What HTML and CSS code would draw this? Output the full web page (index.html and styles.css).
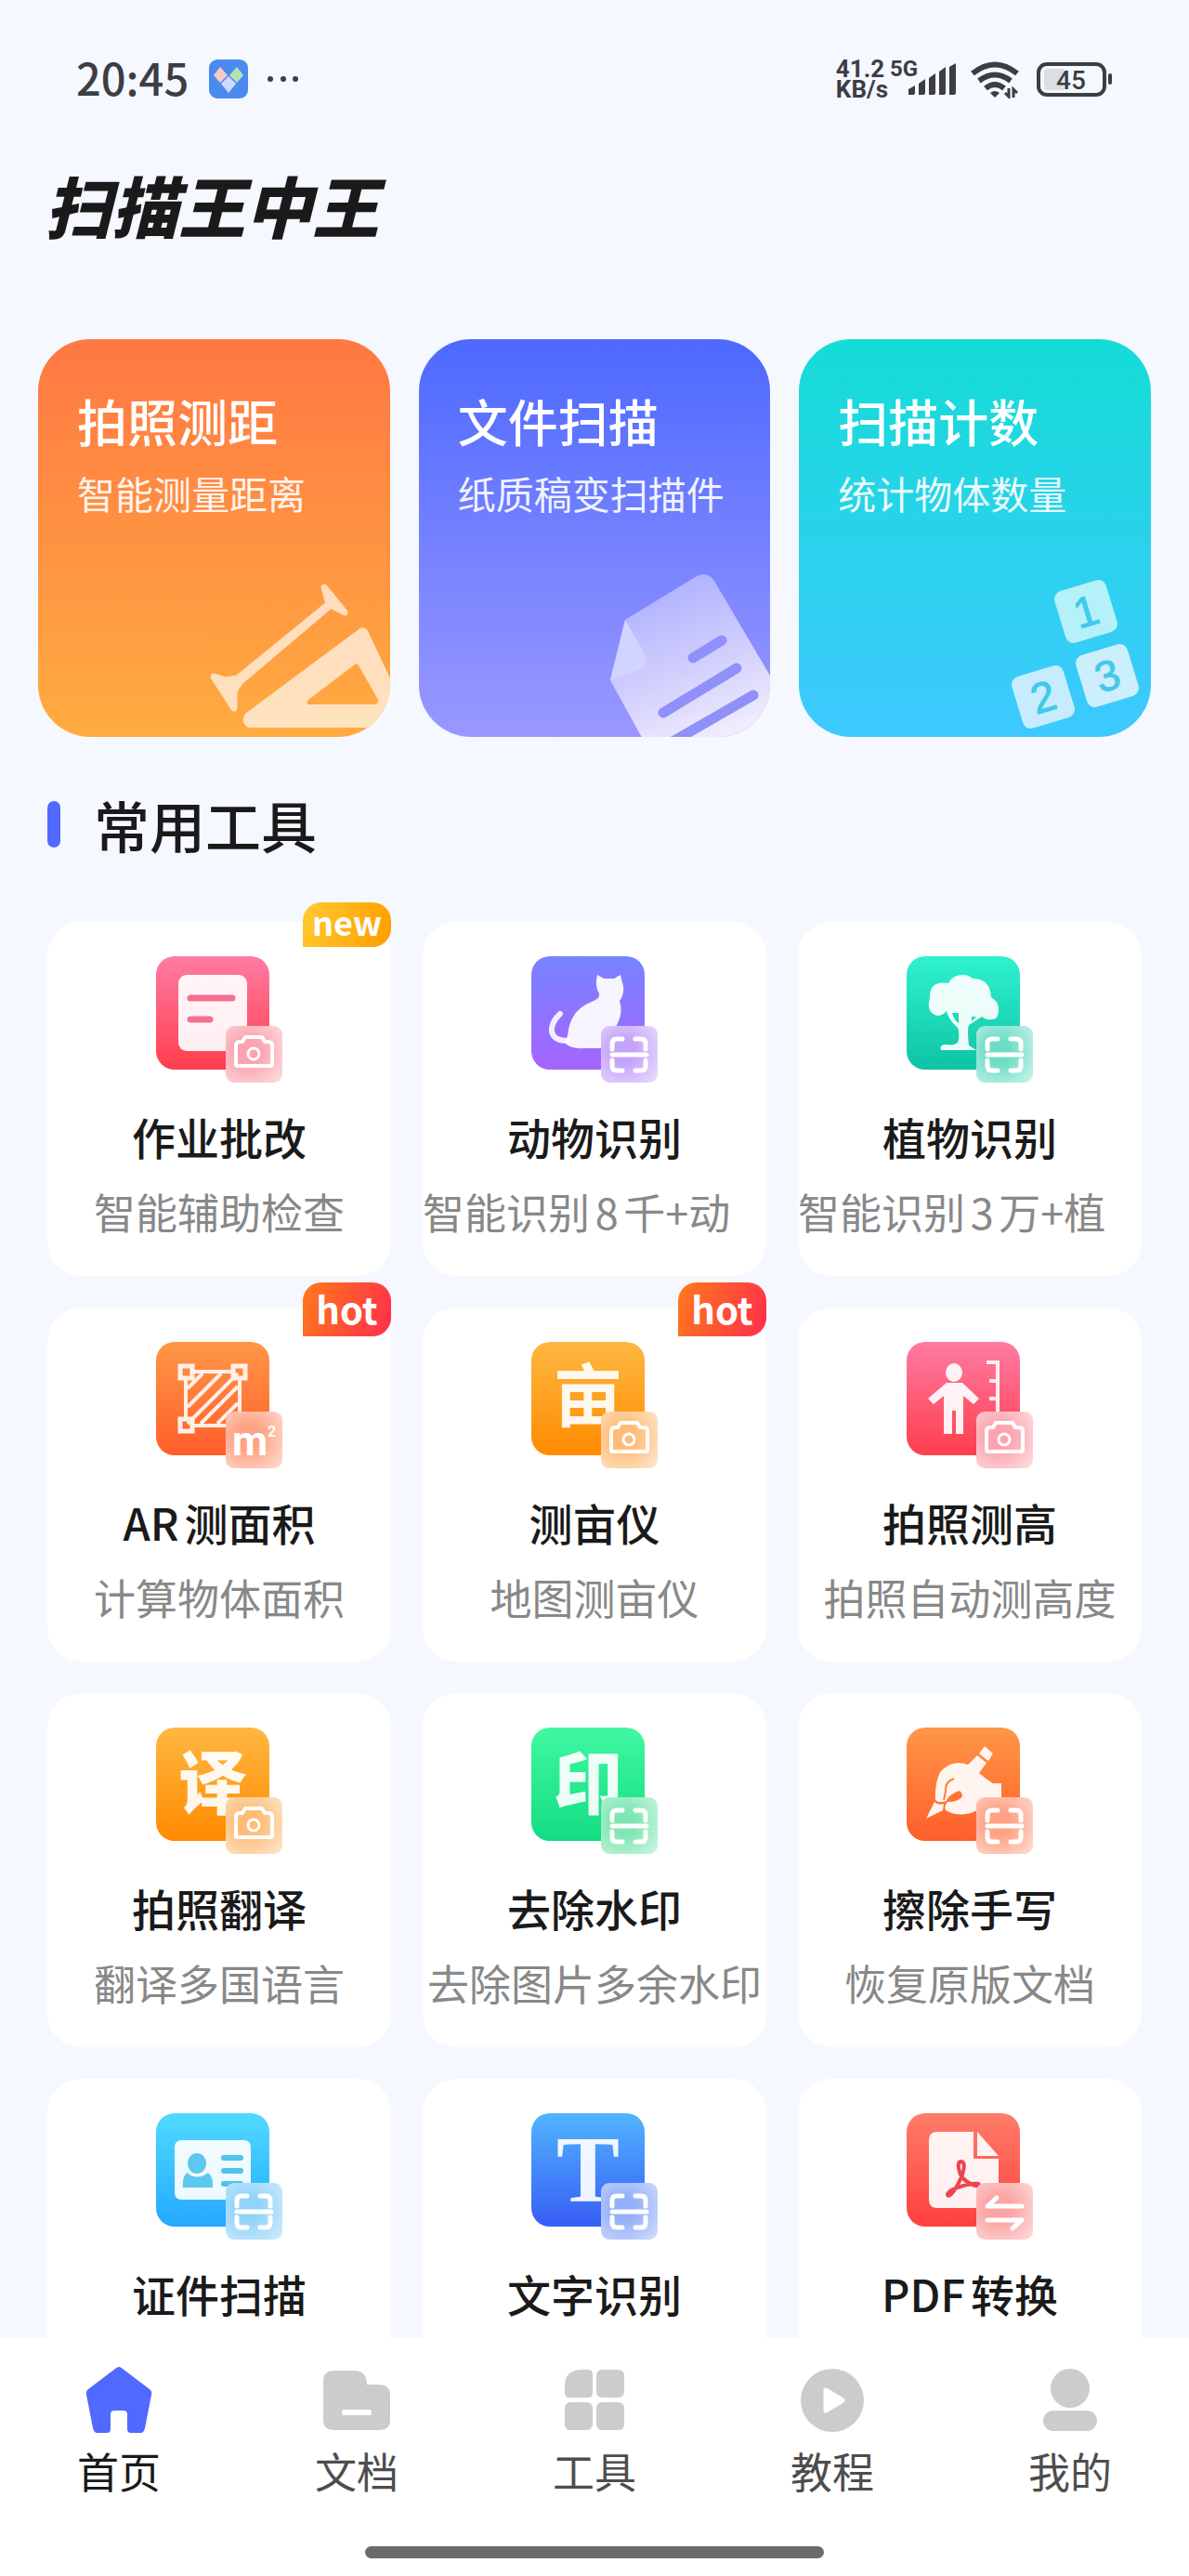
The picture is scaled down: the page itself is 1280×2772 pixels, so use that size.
FILE: index.html
```html
<!DOCTYPE html>
<html lang="zh-CN">
<head>
  <meta charset="UTF-8">
  <meta name="viewport" content="width=device-width, initial-scale=1.0">
  <title>扫描王中王</title>
  <link rel="stylesheet" href="styles.css">
</head>
<body>
  <!-- Shared corner badges -->
  <svg class="sprite" width="0" height="0" aria-hidden="true">
    <symbol id="badge-camera" viewBox="0 0 61 61">
      <path d="M11 21q0-4 4-4h3l3-5h18l3 5h4q4 0 4 4v20q0 2-2 2H13q-2 0-2-2z" fill="none" stroke="#fff" stroke-width="4" stroke-linejoin="round"/>
      <circle cx="30" cy="30" r="6" fill="none" stroke="#fff" stroke-width="3"/>
    </symbol>
    <symbol id="badge-scan" viewBox="0 0 61 61">
      <path d="M12 25v-6q0-5 5-5h6M37 14h6q5 0 5 5v6M12 37v6q0 5 5 5h6M37 48h6q5 0 5-5v-6M12 31h37" fill="none" stroke="#fff" stroke-width="5" stroke-linecap="round"/>
    </symbol>
  </svg>

  <div class="app">
    <main class="content">
      <!-- Status bar -->
      <div class="status-bar">
        <span class="time">20:45</span>
        <svg class="status-app" viewBox="0 0 42 42">
          <rect width="42" height="42" rx="9" fill="#4b8bf0"/>
          <path d="M12 8l8 9-8 8-7-8z" fill="#f6c9cb"/>
          <path d="M30 8l7 9-7 8-8-8z" fill="#b9e0b4"/>
          <path d="M21 18l8 8-8 10-8-10z" fill="#cfd9fb"/>
        </svg>
        <svg class="status-dots" viewBox="0 0 36 8">
          <circle cx="4" cy="4" r="3"/><circle cx="18" cy="4" r="3"/><circle cx="31" cy="4" r="3"/>
        </svg>
        <span class="speed">41.2<br>KB/s</span>
        <svg class="signal" viewBox="0 0 72 42">
          <text x="0" y="18">5G</text>
          <path d="M20 38v-6l7-4v8q0 2-2 2zM31 38V26l7-5v15q0 2-2 2zM42 38V20l7-5v21q0 2-2 2zM53 38V13l7-5v28q0 2-2 2zM64 38V8l7-4v32q0 2-2 2z"/>
        </svg>
        <svg class="wifi" viewBox="0 0 54 42">
          <path d="M3 15q24-19 48 0M10 23q17-13 34 0M17 31q10-8 20 0" fill="none" stroke-width="6"/>
          <path d="M22 36q5-4 10 0l-5 5z"/>
          <path d="M42 31v9l-4-4M47 41v-9l4 4" fill="none" stroke-width="3"/>
        </svg>
        <svg class="battery" viewBox="0 0 82 42">
          <rect x="2" y="5" width="71" height="33" rx="9" fill="none" stroke-width="4"/>
          <path d="M12 10h17v23H12q-4 0-4-4V14q0-4 4-4z" fill="#dddde5" stroke="none"/>
          <rect x="77" y="15" width="4" height="12" rx="2" stroke="none"/>
          <text x="37" y="32">45</text>
        </svg>
      </div>

      <h1 class="app-title">扫描王中王</h1>

      <!-- Main features -->
      <section class="features">
        <a href="#" class="feature feature-orange">
          <h2>拍照测距</h2>
          <p>智能测量距离</p>
          <svg class="art" viewBox="0 0 200 210">
            <g opacity="0.66">
              <path d="M129 49l5 18-98 80-13 2-13-4 22 34 0-19 7-10 97-82 15 8z" fill="#fff" stroke="#fff" stroke-width="7" stroke-linejoin="round"/>
              <path d="M165 95q6-6 11 1l49 104H47q-9-6-3-15zM162 132l-50 38q-4 5 1 5h70q5-1 4-5l-21-37q-2-3-4-1z" fill="#fff" fill-rule="evenodd"/>
            </g>
          </svg>
        </a>
        <a href="#" class="feature feature-blue">
          <h2>文件扫描</h2>
          <p>纸质稿变扫描件</p>
          <svg class="art" viewBox="0 0 200 210">
            <defs>
              <linearGradient id="paper" x1="0.2" y1="0" x2="0.6" y2="1">
                <stop offset="0" stop-color="#a9adff"/>
                <stop offset="0.6" stop-color="#d3d0fd"/>
                <stop offset="1" stop-color="#f0eefd"/>
              </linearGradient>
            </defs>
            <path d="M44 84l77-47q13-6 20 7l66 112v60H65L28 149z" fill="url(#paper)"/>
            <path d="M44 84l21 37q5 13-6 17l-31 11z" fill="#d3d3ff"/>
            <path d="M117 125l31-19M85 184l79-48M90 218l92-53" stroke="#9090fa" stroke-width="11" stroke-linecap="round"/>
          </svg>
        </a>
        <a href="#" class="feature feature-cyan">
          <h2>扫描计数</h2>
          <p>统计物体数量</p>
          <svg class="art art-count" viewBox="0 0 200 210">
            <g transform="translate(130 75) rotate(-17)">
              <rect x="-29" y="-29" width="58" height="58" rx="9" fill="#b4f1f8"/>
              <text y="16">1</text>
            </g>
            <g transform="translate(84 167) rotate(-17)">
              <rect x="-29" y="-29" width="58" height="58" rx="9" fill="#c6ecfe"/>
              <text y="16">2</text>
            </g>
            <g transform="translate(153 144) rotate(-17)">
              <rect x="-29" y="-29" width="58" height="58" rx="9" fill="#cdeefd"/>
              <text y="16">3</text>
            </g>
          </svg>
        </a>
      </section>

      <!-- Tools -->
      <h2 class="section-title">常用工具</h2>
      <section class="tools">
        <a href="#" class="tool">
          <span class="tag tag-new">new</span>
          <span class="icon pink">
            <svg class="glyph" viewBox="0 0 122 122">
              <rect x="24" y="20" width="74" height="82" rx="9"/>
              <path d="M37 45h45M37 68h21" fill="none" stroke="#f4708f" stroke-width="7" stroke-linecap="round"/>
            </svg>
            <svg class="badge"><use href="#badge-camera"/></svg>
          </span>
          <h3>作业批改</h3>
          <p>智能辅助检查</p>
        </a>
        <a href="#" class="tool">
          <span class="icon purple">
            <svg class="glyph" viewBox="0 0 122 122">
              <path d="M31 62q-10 9-9 19 2 10 17 10" fill="none" stroke="#f3eefe" stroke-width="6" stroke-linecap="round"/>
              <path d="M71 20l7 4h11l7-4q1 6 3 12 1 10-4 16 4 12-2 24-6 10-7 27H57q-15 1-21-6 3-5 4-14 4-22 25-30 10-4 8-9-5-8-2-20z"/>
            </svg>
            <svg class="badge"><use href="#badge-scan"/></svg>
          </span>
          <h3>动物识别</h3>
          <p class="clipped">智能识别8千+动</p>
        </a>
        <a href="#" class="tool">
          <span class="icon teal">
            <svg class="glyph" viewBox="0 0 122 122">
              <path d="M45 29q4-9 16-9 6 0 10 4 19 0 20 20 9 6 8 14 0 11-9 10-5 1-9-3l-14 9q-2 5 0 22l8 5H37q-2-6 6-6 12 2 13-5 1-12-2-14-9-8-11-17-6 7-13 4-9-5-5-18-1-19 20-16zM49 61q2 8 7 11V61zM70 70l5-5h-5z" fill-rule="evenodd"/>
            </svg>
            <svg class="badge"><use href="#badge-scan"/></svg>
          </span>
          <h3>植物识别</h3>
          <p class="clipped">智能识别3万+植</p>
        </a>

        <a href="#" class="tool">
          <span class="tag tag-hot">hot</span>
          <span class="icon orange">
            <svg class="glyph line" viewBox="0 0 122 122">
              <path d="M41 32h40M32 41v40M90 41v48M41 90h49M34 50l16-16M34 70l36-36M34 88l54-54M48 88l40-40M66 88l22-22" stroke-width="4"/>
              <path d="M26 26h13v13H26zM83 26h13v13H83zM26 83h13v13H26z" stroke-width="5"/>
            </svg>
            <svg class="badge badge-text" viewBox="0 0 61 61">
              <text x="7" y="47" class="unit">m</text>
              <text x="45" y="27" class="power">2</text>
            </svg>
          </span>
          <h3>AR测面积</h3>
          <p>计算物体面积</p>
        </a>
        <a href="#" class="tool">
          <span class="tag tag-hot">hot</span>
          <span class="icon amber">
            <svg class="glyph" viewBox="0 0 122 122"><text x="61" y="85" class="word">亩</text></svg>
            <svg class="badge"><use href="#badge-camera"/></svg>
          </span>
          <h3>测亩仪</h3>
          <p>地图测亩仪</p>
        </a>
        <a href="#" class="tool">
          <span class="icon pink">
            <svg class="glyph" viewBox="0 0 122 122">
              <ellipse cx="51" cy="33" rx="9" ry="10"/>
              <path d="M43 44h17l18 17-6 6-11-9v41H53V74h-4v25h-9V58l-11 9-6-6z"/>
              <path d="M86 22h12v55M89 42h9M89 61h9" fill="none" stroke="#fdeef1" stroke-width="4"/>
            </svg>
            <svg class="badge"><use href="#badge-camera"/></svg>
          </span>
          <h3>拍照测高</h3>
          <p>拍照自动测高度</p>
        </a>

        <a href="#" class="tool">
          <span class="icon amber">
            <svg class="glyph" viewBox="0 0 122 122"><text x="61" y="87" class="word heavy">译</text></svg>
            <svg class="badge"><use href="#badge-camera"/></svg>
          </span>
          <h3>拍照翻译</h3>
          <p>翻译多国语言</p>
        </a>
        <a href="#" class="tool">
          <span class="icon green">
            <svg class="glyph" viewBox="0 0 122 122"><text x="61" y="87" class="word heavy">印</text></svg>
            <svg class="badge"><use href="#badge-scan"/></svg>
          </span>
          <h3>去除水印</h3>
          <p>去除图片多余水印</p>
        </a>
        <a href="#" class="tool">
          <span class="icon orange">
            <svg class="glyph" viewBox="0 0 122 122">
              <path d="M84 20l9 8-5 8-10-8zM76 30l10 8-8 11q8 7 15 11h9v24L76 89q-18 9-34 0-2-5 2-9 12 0 16-6-1-9-8-4-8 4-9 9-8 3-12-1-1-18 5-30 9-10 20-10 5 0 10 2z"/>
              <path d="M30 80q4 4 10 2l-1 7-18 9z"/>
              <path d="M51 55q-10 3-9 14l-2 9" fill="none" stroke="#ff7b3a" stroke-width="2"/>
            </svg>
            <svg class="badge"><use href="#badge-scan"/></svg>
          </span>
          <h3>擦除手写</h3>
          <p>恢复原版文档</p>
        </a>

        <a href="#" class="tool">
          <span class="icon sky">
            <svg class="glyph" viewBox="0 0 122 122">
              <rect x="20" y="29" width="82" height="64" rx="7"/>
              <g fill="#4fc2ee">
                <ellipse cx="44" cy="54" rx="10" ry="11"/>
                <path d="M33 64q11 9 23 0 6 5 5 16H29q-1-11 4-16z"/>
              </g>
              <path d="M73 48h18M73 62h18M73 76h18" fill="none" stroke="#4fc2ee" stroke-width="6" stroke-linecap="round"/>
            </svg>
            <svg class="badge"><use href="#badge-scan"/></svg>
          </span>
          <h3>证件扫描</h3>
        </a>
        <a href="#" class="tool">
          <span class="icon blue">
            <svg class="glyph" viewBox="0 0 122 122"><text x="61" y="95" class="serif">T</text></svg>
            <svg class="badge"><use href="#badge-scan"/></svg>
          </span>
          <h3>文字识别</h3>
        </a>
        <a href="#" class="tool">
          <span class="icon red">
            <svg class="glyph" viewBox="0 0 122 122">
              <path d="M72 20v29h27v44q0 9-9 9H33q-9 0-9-9V29q0-9 9-9zM76 20l23 26H76z"/>
              <path d="M58 66q-5-14 1-14 5 1 1 14-5 13-11 20-5 5-5 1 2-5 17-9 17-4 17-1-1 3-9-1-8-4-11-10z" fill="none" stroke="#ef4450" stroke-width="4"/>
            </svg>
            <svg class="badge" viewBox="0 0 61 61">
              <path d="M49 25H12l10-9M12 40h37l-10 9" fill="none" stroke="#fff" stroke-width="5" stroke-linecap="round" stroke-linejoin="round"/>
            </svg>
          </span>
          <h3>PDF转换</h3>
        </a>
      </section>
    </main>

    <!-- Bottom navigation -->
    <footer class="footer">
      <nav class="nav">
        <a href="#" class="active">
          <svg viewBox="0 0 72 72"><path d="M32 3q4-4 8 0l29 22q3 2 2 6l-7 36q-1 5-5 5H49q-4 0-4-4V52q0-4-4-4H31q-4 0-4 4v16q0 4-4 4H13q-4 0-5-5L1 31q-1-4 2-6z"/></svg>
          首页
        </a>
        <a href="#">
          <svg viewBox="0 0 72 72"><path d="M12 5h23q12 1 12 15h13q12 0 12 12v26q0 11-12 11H12Q0 69 0 58V16Q0 5 12 5z"/><rect x="20" y="47" width="32" height="6" rx="2" fill="#fff"/></svg>
          文档
        </a>
        <a href="#">
          <svg viewBox="0 0 72 72"><path d="M20 4h9q5 0 5 5v20q0 5-5 5H9q-5 0-5-5v-9Q5 5 20 4z"/><rect x="38" y="4" width="30" height="30" rx="6"/><rect x="4" y="39" width="30" height="30" rx="6"/><rect x="38" y="39" width="30" height="30" rx="6"/></svg>
          工具
        </a>
        <a href="#">
          <svg viewBox="0 0 72 72"><circle cx="36" cy="37" r="34"/><path d="M29 26l18 11-18 11z" fill="#fff" stroke="#fff" stroke-width="5" stroke-linejoin="round"/></svg>
          教程
        </a>
        <a href="#">
          <svg viewBox="0 0 72 72"><circle cx="36" cy="24" r="21"/><rect x="7" y="48" width="58" height="22" rx="11"/></svg>
          我的
        </a>
      </nav>
      <div class="home-bar"></div>
    </footer>
  </div>
</body>
</html>
```
FILE: styles.css
```css
/* Global Styles */
* {
  margin: 0;
  padding: 0;
  box-sizing: border-box;
}

body {
  font-family: "Noto Sans CJK SC", "Noto Sans", sans-serif;
  background-color: #f5f8ff;
  color: #1a1a1a;
  text-autospace: normal;
}

a {
  color: inherit;
  text-decoration: none;
}

svg {
  display: block;
  flex: none;
}

.sprite {
  position: absolute;
}

.app {
  display: flex;
  flex-direction: column;
  height: 100vh;
}

.content {
  flex: 1;
  min-height: 0;
  overflow-y: auto;
  scrollbar-width: none;
}

/* Status Bar */
.status-bar {
  display: flex;
  align-items: center;
  height: 42px;
  margin-top: 64px;
  padding: 0 82px;
  color: #3d3d44;
  fill: #3d3d44;
}

.time {
  font-size: 47px;
  line-height: 38px;
  font-weight: 500;
  margin: 0 22px 4px 0;
}

.status-app {
  width: 42px;
  height: 42px;
  margin-right: 20px;
}

.status-dots {
  width: 36px;
  height: 8px;
  margin-right: auto;
}

.speed {
  font-family: Roboto, sans-serif;
  font-size: 26px;
  line-height: 22px;
  font-weight: 700;
  margin-right: 2px;
}

.signal {
  width: 72px;
  height: 42px;
  margin-right: 14px;
  font-family: Roboto, sans-serif;
  font-size: 24px;
  font-weight: 700;
  overflow: visible;
}

.wifi {
  width: 54px;
  height: 42px;
  margin-right: 18px;
  stroke: #3d3d44;
  stroke-width: 0;
}

.battery {
  width: 82px;
  height: 42px;
  stroke: #3d3d44;
}

.battery text {
  font-family: Roboto, sans-serif;
  font-size: 28px;
  font-weight: 500;
  text-anchor: middle;
  stroke: none;
}

.app-title {
  margin: 64px 48px 0;
  font-size: 72px;
  line-height: 100px;
  font-weight: 900;
  font-style: italic;
}

/* Feature Cards */
.features {
  display: grid;
  grid-template-columns: repeat(3, 1fr);
  gap: 31px;
  margin-top: 95px;
  padding: 0 41px;
}

.feature {
  position: relative;
  min-height: 428px;
  padding: 56px 0 0 42px;
  border-radius: 56px;
  color: #fff;
  overflow: hidden;
}

.feature h2 {
  font-size: 54px;
  line-height: 64px;
  font-weight: 500;
}

.feature p {
  margin-top: 20px;
  font-size: 41px;
  line-height: 50px;
  white-space: nowrap;
  opacity: 0.9;
}

.feature-orange {
  background: linear-gradient(#ff7843, #ffac41);
}

.feature-blue {
  background: linear-gradient(#4d69ff, #9a98ff);
}

.feature-cyan {
  background: linear-gradient(#14dcd6, #3ec9ff);
}

.art {
  position: absolute;
  right: 0;
  bottom: 0;
  width: 200px;
  height: 210px;
}

.art-count text {
  font-family: "Liberation Sans", sans-serif;
  font-size: 46px;
  text-anchor: middle;
  fill: #43c9ea;
  stroke: #43c9ea;
}

/* Tools */
.section-title {
  display: flex;
  align-items: center;
  gap: 36px;
  margin-top: 54px;
  padding: 0 51px;
  font-size: 60px;
  line-height: 80px;
  font-weight: 500;
}

.section-title::before {
  content: "";
  width: 14px;
  height: 50px;
  border-radius: 7px;
  background-color: #5069ff;
}

.tools {
  display: grid;
  grid-template-columns: repeat(3, 1fr);
  gap: 34px;
  margin-top: 65px;
  padding: 0 51px 34px;
}

.tool {
  position: relative;
  display: flex;
  flex-direction: column;
  align-items: center;
  min-height: 381px;
  padding-top: 37px;
  border-radius: 36px;
  background-color: #fff;
}

.tool h3 {
  margin-top: 30px;
  font-size: 47px;
  line-height: 56px;
  font-weight: 500;
}

.tool p {
  margin-top: 26px;
  font-size: 45px;
  line-height: 54px;
  color: #888;
  white-space: nowrap;
}

.tool .clipped {
  align-self: flex-start;
}

.tag {
  position: absolute;
  right: 0;
  width: 95px;
  color: #fff;
  font-weight: 700;
  text-align: center;
  border-radius: 20px 20px 20px 0;
}

.tag-new {
  top: -21px;
  font-size: 36px;
  line-height: 40px;
  padding-bottom: 8px;
  background: linear-gradient(110deg, #ffcb30, #ff9c00);
}

.tag-hot {
  top: -27px;
  font-size: 40px;
  line-height: 56px;
  padding-bottom: 2px;
  background: linear-gradient(110deg, #ff7a1c, #ff2d4c);
}

/* Tool Icons */
.icon {
  position: relative;
  width: 136px;
  height: 136px;
}

.glyph {
  width: 122px;
  height: 122px;
  border-radius: 20px;
  background: linear-gradient(var(--top), var(--bottom));
  fill: #fff;
  fill-opacity: 0.92;
}

.line {
  fill: none;
  stroke: #fff0e8;
}

.badge {
  position: absolute;
  right: 0;
  bottom: 0;
  width: 61px;
  height: 61px;
  border-radius: 9px;
  background: radial-gradient(circle at 40% 45%, var(--soft) 25%, var(--pale) 100%);
}

.word {
  font-size: 74px;
  font-weight: 700;
  text-anchor: middle;
}

.heavy {
  font-weight: 900;
}

.serif {
  font-family: "Liberation Serif", serif;
  font-size: 102px;
  font-weight: 700;
  text-anchor: middle;
}

.badge-text {
  font-family: Roboto, sans-serif;
  font-weight: 700;
  fill: #fff;
}

.unit {
  font-size: 44px;
}

.power {
  font-size: 16px;
}

.pink {
  --top: #ff7ba4;
  --bottom: #ff3e4c;
  --soft: #fba3ae;
  --pale: #fde0e3;
}

.purple {
  --top: #7684ff;
  --bottom: #a664ff;
  --soft: #c3a4fa;
  --pale: #ecdffd;
}

.teal {
  --top: #2ff2ce;
  --bottom: #0dc4a5;
  --soft: #6edcc6;
  --pale: #cdf5ec;
}

.orange {
  --top: #ff9747;
  --bottom: #ff5e2a;
  --soft: #ffa183;
  --pale: #fedfd6;
}

.amber {
  --top: #ffb743;
  --bottom: #ff8b00;
  --soft: #fdbd78;
  --pale: #fee9d2;
}

.green {
  --top: #40f8a1;
  --bottom: #12dc82;
  --soft: #7de6b3;
  --pale: #d0f7e3;
}

.sky {
  --top: #50daff;
  --bottom: #24a9ff;
  --soft: #90d4fa;
  --pale: #d3ebfc;
}

.blue {
  --top: #51b4ff;
  --bottom: #375df5;
  --soft: #94b0fa;
  --pale: #d3defd;
}

.red {
  --top: #ff7d6a;
  --bottom: #ff3f3e;
  --soft: #fca3a3;
  --pale: #fddcdc;
}

/* Bottom Navigation */
.footer {
  background-color: #fff;
}

.nav {
  display: grid;
  grid-template-columns: repeat(5, 1fr);
  padding-top: 30px;
}

.nav a {
  display: flex;
  flex-direction: column;
  align-items: center;
  gap: 16px;
  font-size: 45px;
  line-height: 50px;
  color: #4d4d4d;
}

.nav svg {
  width: 72px;
  height: 72px;
  fill: #ccc;
}

.nav .active {
  color: #1a1a1a;
}

.nav .active svg {
  fill: #5069ff;
}

.home-bar {
  width: 494px;
  height: 13px;
  margin: 56px auto 19px;
  border-radius: 7px;
  background-color: #6b6b6b;
}
```
